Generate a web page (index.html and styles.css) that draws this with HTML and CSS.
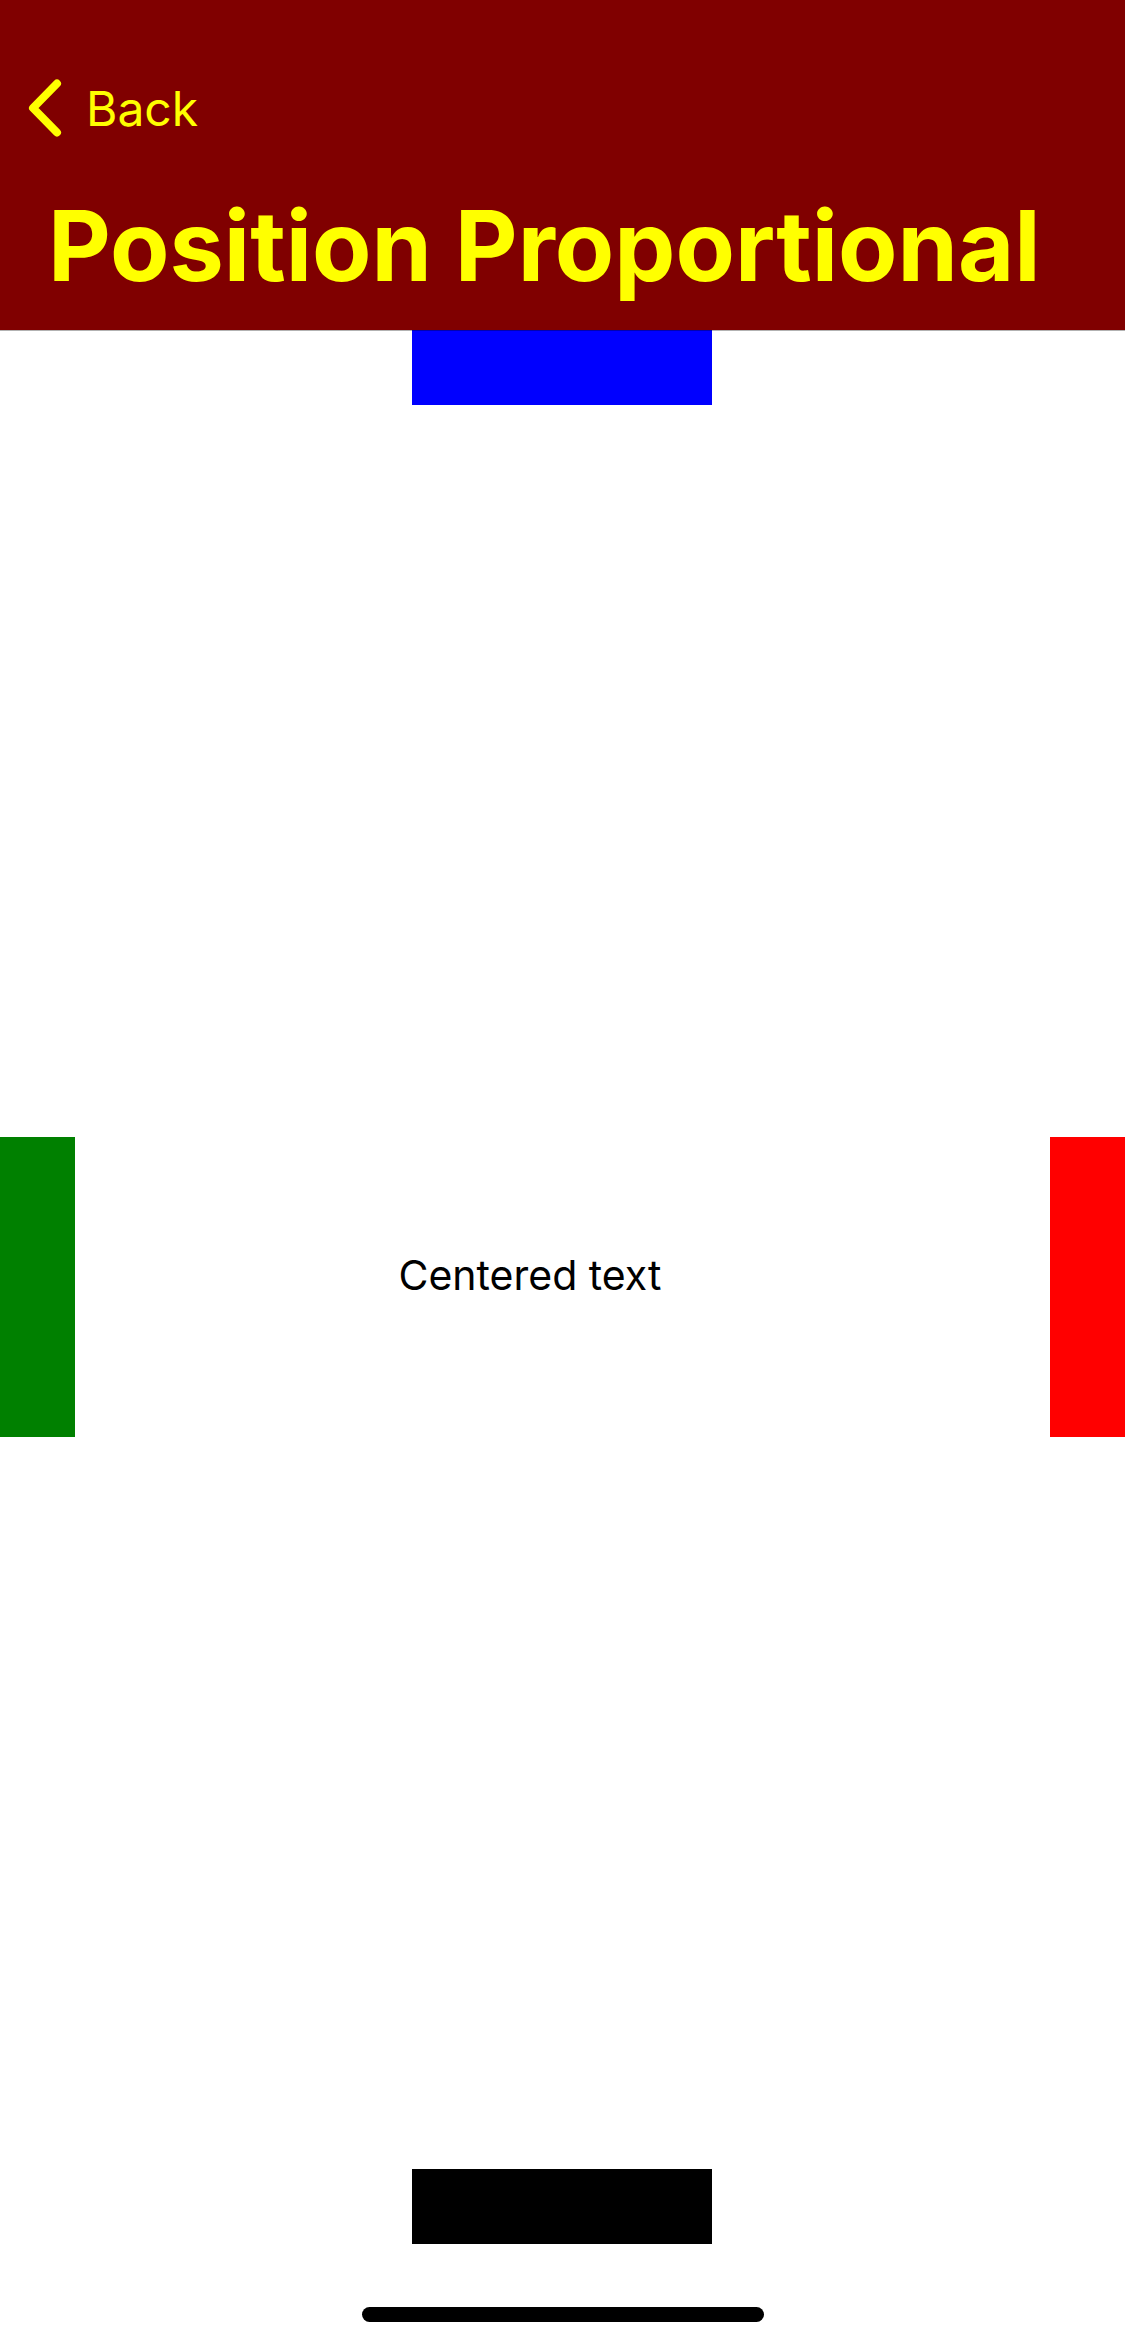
FILE: index.html
```html
<!DOCTYPE html>
<html lang="en">
<head>
<meta charset="utf-8">
<meta name="viewport" content="width=device-width, initial-scale=1">
<title>Position Proportional</title>
<link rel="stylesheet" href="styles.css">
</head>
<body>
<header class="nav">
  <button class="back" type="button">
    <svg class="chevron" viewBox="0 0 34 58" aria-hidden="true"><path d="M29 4.5L5 29L29 53.5"/></svg>
    <span>Back</span>
  </button>
  <h1 class="title">Position Proportional</h1>
</header>
<main class="stage">
  <div class="bar top"></div>
  <div class="middle">
    <div class="side left"></div>
    <p class="label">Centered text</p>
    <div class="side right"></div>
  </div>
  <div class="bar bottom"></div>
</main>
<footer class="home"><div class="indicator"></div></footer>
</body>
</html>
```

FILE: styles.css
```css
* { box-sizing: border-box; }
body {
  margin: 0;
  min-height: 100vh;
  display: flex;
  flex-direction: column;
  background: #fff;
  color: #000;
  font-family: Inter, "Liberation Sans", sans-serif;
}
.nav {
  background: #800000;
  color: #ff0;
  padding: 76px 28px 24px;
}
.back {
  display: flex;
  align-items: center;
  gap: 24px;
  height: 64px;
  padding: 0;
  border: 0;
  background: none;
  color: inherit;
  font: inherit;
  font-size: 48px;
}
.chevron {
  width: 34px;
  height: 58px;
  fill: none;
  stroke: currentColor;
  stroke-width: 8;
  stroke-linecap: round;
  stroke-linejoin: round;
}
.title {
  margin: 46px 0 0 20px;
  font-size: 97px;
  font-weight: 700;
  line-height: 120px;
  white-space: nowrap;
}
.stage {
  flex: 1;
  display: flex;
  flex-direction: column;
  align-items: center;
  justify-content: space-between;
}
.bar { width: 300px; height: 75px; margin-right: 1px; }
.top { background: #00f; }
.bottom { background: #000; }
/* hairline shadow under the navigation bar */
.stage { box-shadow: inset 0 1px rgba(0, 0, 0, 0.3); }
.top { box-shadow: inset 0 1px rgba(0, 0, 0, 0.3); }
.middle {
  width: 100%;
  display: grid;
  grid-template-columns: 75px 1fr 75px;
}
.side { height: 300px; }
.left { background: #008000; }
.right { background: #f00; }
.label {
  justify-self: center;
  width: 328px;
  margin: 113px 0 0;
  font-size: 41px;
  line-height: 50px;
  white-space: nowrap;
}
.home {
  height: 102px;
  display: flex;
  justify-content: center;
  align-items: flex-end;
  padding-bottom: 24px;
}
.indicator {
  width: 402px;
  height: 15px;
  border-radius: 8px;
  background: #000;
}
```
